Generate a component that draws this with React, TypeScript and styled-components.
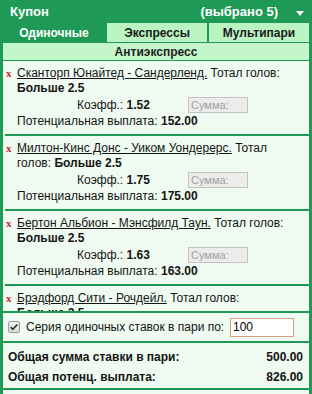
import React from "react";
import styled, { createGlobalStyle } from "styled-components";

const GREEN = "#1e9a56";
const LIGHT = "#effbf1";

const GlobalStyle = createGlobalStyle`
  body {
    margin: 0;
    background: #ffffff;
    font-family: "Liberation Sans", Arial, sans-serif;
    color: #141414;
  }
`;

type Bet = {
  match: string;
  market: string;
  outcome: string;
  coef: string;
  payout: string;
};

const bets: Bet[] = [
  { match: "Сканторп Юнайтед - Сандерленд.", market: "Тотал голов:", outcome: "Больше 2.5", coef: "1.52", payout: "152.00" },
  { match: "Милтон-Кинс Донс - Уиком Уондерерс.", market: "Тотал голов:", outcome: "Больше 2.5", coef: "1.75", payout: "175.00" },
  { match: "Бертон Альбион - Мэнсфилд Таун.", market: "Тотал голов:", outcome: "Больше 2.5", coef: "1.63", payout: "163.00" },
  { match: "Брэдфорд Сити - Рочдейл.", market: "Тотал голов:", outcome: "Больше 2.5", coef: "1.59", payout: "159.00" },
  { match: "Транмир Роверс - Олдем Атлетик.", market: "Тотал голов:", outcome: "Больше 2.5", coef: "1.77", payout: "177.00" },
];

function BetItem({ match, market, outcome, coef, payout }: Bet) {
  return (
    <Item>
      <Remove>x</Remove>
      <ItemBody>
        <div>
          <MatchLink>{match}</MatchLink> {market} <Outcome>{outcome}</Outcome>
        </div>
        <CoefRow>
          <CoefCell>
            Коэфф.: <b>{coef}</b>
          </CoefCell>
          <SumInput placeholder="Сумма:" disabled />
        </CoefRow>
        <div>
          Потенциальная выплата: <b>{payout}</b>
        </div>
      </ItemBody>
    </Item>
  );
}

export default function App() {
  return (
    <>
      <GlobalStyle />
      <Coupon>
        <Header>
          <HeaderTitle>Купон</HeaderTitle>
          <Selected>(выбрано 5)</Selected>
          <Caret viewBox="0 0 8 5">
            <path d="M0 0h8L4 5z" fill="#ffffff" />
          </Caret>
        </Header>
        <Tabs>
          <Tab $active>Одиночные</Tab>
          <Tab>Экспрессы</Tab>
          <Tab>Мультипари</Tab>
        </Tabs>
        <SubTab>Антиэкспресс</SubTab>
        <List>
          {bets.map((b) => (
            <BetItem key={b.match} {...b} />
          ))}
        </List>
        <SeriesRow>
          <Check>
            <svg viewBox="0 0 12 12" width="10" height="10">
              <path d="M2 6.2l2.6 2.6L10 3" stroke="#333" strokeWidth="2" fill="none" />
            </svg>
          </Check>
          <SeriesLabel>Серия одиночных ставок в пари по:</SeriesLabel>
          <SeriesInput defaultValue="100" />
        </SeriesRow>
        <Totals>
          <TotalRow>
            <span>Общая сумма ставки в пари:</span>
            <span>500.00</span>
          </TotalRow>
          <TotalRow>
            <span>Общая потенц. выплата:</span>
            <span>826.00</span>
          </TotalRow>
        </Totals>
        <Footer />
      </Coupon>
    </>
  );
}

const Coupon = styled.div`
  width: 312px;
  box-sizing: border-box;
  border: 3px solid ${GREEN};
  border-top: 0;
  background: ${LIGHT};
  display: flex;
  flex-direction: column;
  font-size: 12px;
`;

const Header = styled.div`
  height: 23px;
  margin: 0 -3px;
  padding: 0 8px 0 10px;
  background: ${GREEN};
  color: #fff;
  font-weight: bold;
  font-size: 13px;
  display: flex;
  align-items: center;
`;

const HeaderTitle = styled.span`
  flex: 1;
`;

const Selected = styled.span`
  margin-right: 18px;
`;

const Caret = styled.svg`
  width: 8px;
  height: 5px;
  margin-top: 3px;
`;

const Tabs = styled.div`
  display: grid;
  grid-template-columns: 102px 100px 1fr;
  gap: 2px;
  background: ${GREEN};
  padding-bottom: 1px;
`;

const Tab = styled.div<{ $active?: boolean }>`
  height: 19px;
  display: flex;
  align-items: center;
  justify-content: center;
  font-weight: bold;
  background: ${({ $active }) => ($active ? GREEN : "#b9f4c2")};
  color: ${({ $active }) => ($active ? "#fff" : "#1a1a1a")};
`;

const SubTab = styled.div`
  height: 17px;
  display: flex;
  align-items: center;
  justify-content: center;
  font-weight: bold;
  color: #1f1f1f;
  background: #c3f6cb;
  border-bottom: 1px solid ${GREEN};
`;

const List = styled.div`
  height: 250px;
  overflow-y: scroll;

  &::-webkit-scrollbar {
    width: 9px;
  }
  &::-webkit-scrollbar-track {
    background: transparent;
  }
  &::-webkit-scrollbar-thumb {
    background: #1b8d4d;
    border: 2px solid ${LIGHT};
    border-top-width: 4px;
    border-radius: 5px;
  }
`;

const Item = styled.div`
  display: flex;
  margin-left: 2px;
  padding: 5px 8px 5px 1px;
  border-bottom: 2px solid ${GREEN};
  line-height: 15px;
`;

const Remove = styled.span`
  width: 11px;
  flex-shrink: 0;
  font-family: "Liberation Serif", "Times New Roman", serif;
  font-weight: bold;
  font-size: 11px;
  color: #c4262b;
  cursor: pointer;
`;

const ItemBody = styled.div`
  flex: 1;
  min-width: 0;
`;

const MatchLink = styled.a`
  color: #141414;
  text-decoration: underline;
  cursor: pointer;
`;

const Outcome = styled.b`
  white-space: nowrap;
`;

const CoefRow = styled.div`
  height: 18px;
  display: flex;
  align-items: center;
  padding-left: 60px;
`;

const CoefCell = styled.span`
  width: 111px;
  flex-shrink: 0;
`;

const SumInput = styled.input`
  width: 60px;
  height: 16px;
  flex-shrink: 0;
  box-sizing: border-box;
  padding: 0 2px;
  border: 1px solid #c2c2c2;
  background: #ececec;
  font-family: inherit;
  font-size: 11px;

  &::placeholder {
    color: #a0a0a0;
  }
`;

const SeriesRow = styled.div`
  height: 28px;
  display: flex;
  align-items: center;
  padding: 0 0 0 5px;
  border-top: 2px solid ${GREEN};
  border-bottom: 2px solid ${GREEN};
  font-size: 12px;
`;

const Check = styled.span`
  width: 12px;
  height: 12px;
  flex-shrink: 0;
  box-sizing: border-box;
  border: 1px solid #9a9a9a;
  border-radius: 2px;
  background: linear-gradient(#f4f4f4, #d9d9d9);
  display: flex;
  align-items: center;
  justify-content: center;
  margin-right: 6px;
`;

const SeriesLabel = styled.span`
  flex: 1;
  white-space: nowrap;
`;

const SeriesInput = styled.input`
  width: 64px;
  height: 19px;
  flex-shrink: 0;
  box-sizing: border-box;
  margin-right: 15px;
  padding: 0 2px;
  border: 1px solid #d4a184;
  background: #fff;
  font-family: inherit;
  font-size: 12px;
  outline: none;
`;

const Totals = styled.div`
  padding: 4px 6px 1px 5px;
  border-bottom: 2px solid ${GREEN};
  font-weight: bold;
  font-size: 12px;
`;

const TotalRow = styled.div`
  display: flex;
  justify-content: space-between;
  line-height: 20px;
`;

const Footer = styled.div`
  height: 20px;
`;
